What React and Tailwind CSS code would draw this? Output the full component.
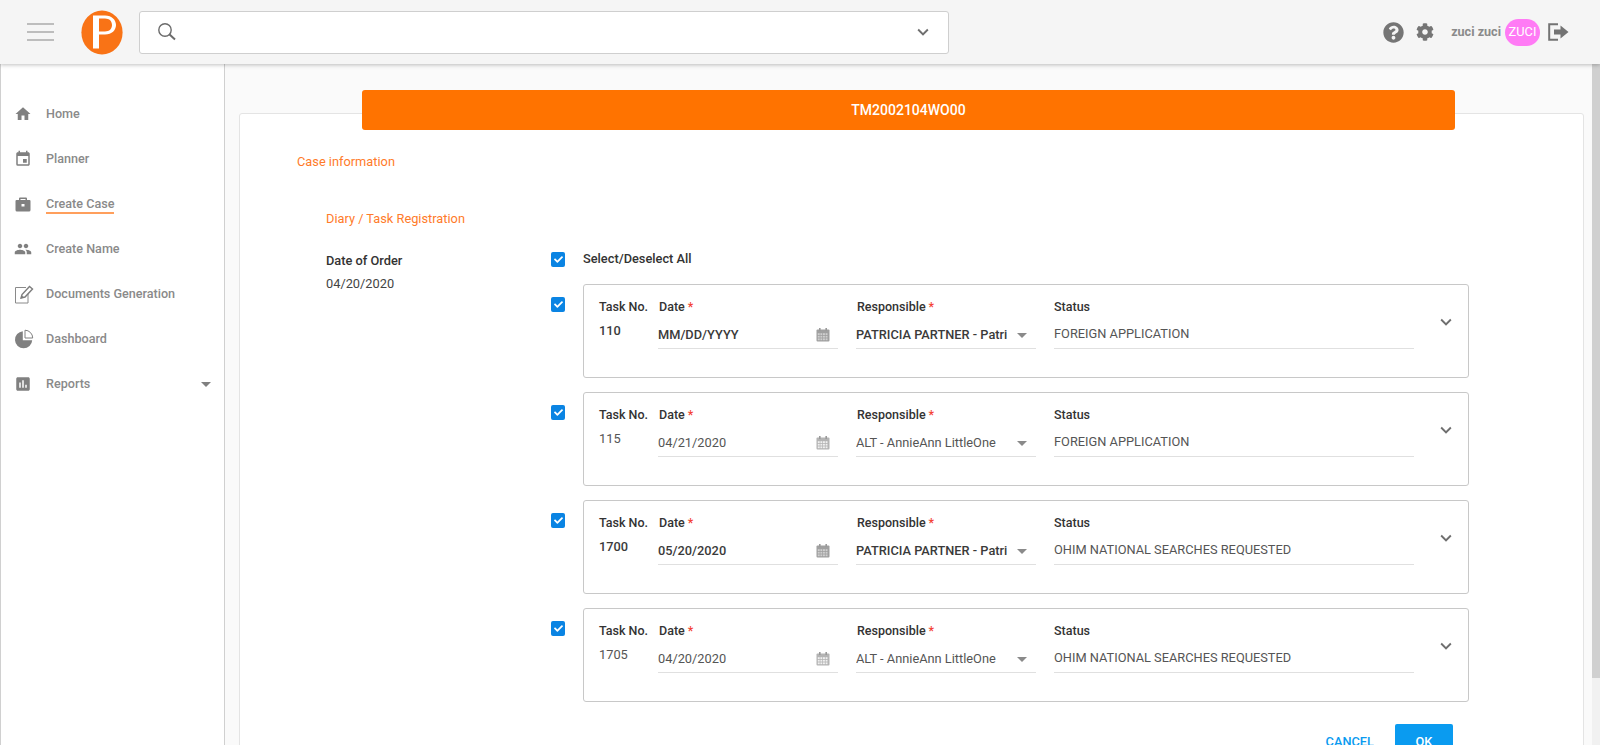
import React from "react";
import { MdHome, MdEvent, MdPeople, MdAssessment, MdArrowDropDown, MdKeyboardArrowDown } from "react-icons/md";
import { FaQuestionCircle, FaCog, FaCheck } from "react-icons/fa";

const Doc = () => (
  <svg width="20" height="20" viewBox="0 0 20 20" fill="none">
    <path d="M12 3.500H1.500V19H14V9" stroke="#8a8a8a" strokeWidth="1" />
    <path d="M7 14l1-3.500L15.500 2.500l3 2.500-7.500 8z" fill="#fff" stroke="#7d7d7d" strokeWidth="1.400" />
    <path d="M7 14.500l1-3 2 2z" fill="#7d7d7d" />
  </svg>
);
const Pie = () => (
  <svg width="20" height="20" viewBox="0 0 20 20">
    <path d="M8.800 2.200A8.600 8.600 0 1 0 18.200 11.200H8.800z" fill="#808080" />
    <path d="M11 1.200A7.800 7.800 0 0 1 18.700 9H11z" fill="#fff" stroke="#808080" strokeWidth="1" />
  </svg>
);
const Briefcase = () => (
  <svg width="18" height="18" viewBox="0 0 18 18">
    <path fillRule="evenodd" d="M6 2.500h6a1 1 0 0 1 1 1V5h2.500a1 1 0 0 1 1 1v9a1.500 1.500 0 0 1-1.500 1.500H3A1.500 1.500 0 0 1 1.500 15V6a1 1 0 0 1 1-1H5V3.500a1 1 0 0 1 1-1zM6.500 4v1h5V4zM7.500 9v2.500h3V9z" fill="#808080" />
  </svg>
);
const Calendar = ({ dark }) => (
  <svg width="14" height="14" viewBox="0 0 14 14">
    <rect x="0.500" y="1.500" width="13" height="12" rx="1" fill={dark ? "#a0a0a0" : "#b4b4b4"} />
    <rect x="3" y="0" width="1.600" height="3" fill="#9a9a9a" />
    <rect x="9.400" y="0" width="1.600" height="3" fill="#9a9a9a" />
    {[5.2, 7.8, 10.4].map((y) => [1.8, 4.4, 7, 9.6].map((x) => (
      <rect key={`${x}-${y}`} x={x} y={y} width="1.900" height="1.800" fill={dark ? "#cfcfcf" : "#f0f0f0"} />
    )))}
  </svg>
);
const Logout = () => (
  <svg width="21" height="18" viewBox="0 0 21 18" fill="none">
    <path d="M10 1.200H1.200v15.600H10" stroke="#737373" strokeWidth="2" />
    <path d="M6 6.500h6.500V2.500L20.500 9l-8 6.500v-4H6z" fill="#737373" />
  </svg>
);
const Search = () => (
  <svg width="20" height="20" viewBox="0 0 20 20" fill="none" stroke="#6b6b6b">
    <circle cx="8" cy="8" r="6.200" strokeWidth="1.400" />
    <path d="M12.600 12.600L18 17.600" strokeWidth="2" />
  </svg>
);

const nav = [
  { label: "Home", icon: <MdHome size={18} color="#808080" /> },
  { label: "Planner", icon: <MdEvent size={18} color="#808080" /> },
  { label: "Create Case", icon: <Briefcase />, active: true },
  { label: "Create Name", icon: <MdPeople size={18} color="#808080" /> },
  { label: "Documents Generation", icon: <Doc /> },
  { label: "Dashboard", icon: <Pie /> },
  { label: "Reports", icon: <MdAssessment size={18} color="#808080" />, caret: true },
];

const tasks = [
  { no: "110", date: "MM/DD/YYYY", who: "PATRICIA PARTNER - Patricia", status: "FOREIGN APPLICATION", strong: true },
  { no: "115", date: "04/21/2020", who: "ALT - AnnieAnn LittleOne", status: "FOREIGN APPLICATION" },
  { no: "1700", date: "05/20/2020", who: "PATRICIA PARTNER - Patricia", status: "OHIM NATIONAL SEARCHES REQUESTED", strong: true },
  { no: "1705", date: "04/20/2020", who: "ALT - AnnieAnn LittleOne", status: "OHIM NATIONAL SEARCHES REQUESTED" },
];

const Check = () => (
  <span className="flex h-[15px] w-[14px] shrink-0 items-center justify-center rounded-[2px] bg-[#0a84e3]">
    <FaCheck size={9} color="#fff" />
  </span>
);

const Label = ({ children, req }) => (
  <div className="h-[14px] text-[12.5px] leading-[14px] font-medium text-[#333]">
    {children}
    {req && <span className="ml-[3px] text-[#f44336]">*</span>}
  </div>
);

function TaskRow({ t }) {
  const text = t.strong ? "font-medium text-[#3a3a3a]" : "font-normal text-[#555]";
  return (
    <div className="flex">
      <div className="w-[32px] pt-[13px]"><Check /></div>
      <div className="flex h-[94px] w-[886px] rounded-[3px] border border-[#c8c8c8] bg-white pt-[15px]">
        <div className="ml-[15px] w-[59px]">
          <Label>Task No.</Label>
          <div className={`mt-[10px] text-[12.8px] leading-[14px] ${text}`}>{t.no}</div>
        </div>
        <div className="w-[198px]">
          <div className="pl-[1px]"><Label req>Date</Label></div>
          <div className={`mt-[7px] flex h-[28px] w-[180px] items-center justify-between border-b border-[#e0e0e0] pr-[7px] text-[12.8px] ${text}`}>
            <span>{t.date}</span>
            <span className="mr-[1px]"><Calendar dark={t.strong} /></span>
          </div>
        </div>
        <div className="w-[198px]">
          <div className="pl-[1px]"><Label req>Responsible</Label></div>
          <div className={`mt-[7px] flex h-[28px] w-[180px] items-center border-b border-[#e0e0e0] text-[12.8px] ${text}`}>
            <span className="w-[151px] overflow-hidden whitespace-nowrap">{t.who}</span>
            <span className="ml-[3px]"><MdArrowDropDown size={24} color="#8a8a8a" /></span>
          </div>
        </div>
        <div className="w-[360px]">
          <Label>Status</Label>
          <div className="mt-[6px] flex h-[29px] items-center border-b border-[#e0e0e0] pb-[1px] text-[12.8px] font-normal text-[#555]">
            {t.status}
          </div>
        </div>
        <div className="ml-[21px] pt-[11px]"><MdKeyboardArrowDown size={22} color="#6f6f6f" /></div>
      </div>
    </div>
  );
}

export default function App() {
  return (
    <div className="flex h-[745px] w-[1600px] flex-col overflow-hidden bg-[#fafafa] font-['Roboto',sans-serif]">
      <header className="relative z-10 flex h-[64px] shrink-0 items-center bg-[#f5f5f5] shadow-[0_1px_4px_rgba(0,0,0,0.25)]">
        <div className="ml-[27px] flex w-[27px] flex-col gap-[6px]">
          <span className="h-[2px] bg-[#bdbdbd]" />
          <span className="h-[2px] bg-[#bdbdbd]" />
          <span className="h-[2px] bg-[#bdbdbd]" />
        </div>
        <svg className="ml-[27px]" width="42" height="45" viewBox="0 0 42 45">
          <ellipse cx="21" cy="22.500" rx="20.600" ry="22" fill="#f97316" />
          <path fillRule="evenodd" d="M12 5.500h12c7 0 11 4.500 11 9.500s-4 9.500-11 9.500h-6v14h-6zM18 8.500v13h6c4.500 0 7-2.800 7-6.500S28.500 8.500 24 8.500z" fill="#fff" />
        </svg>
        <div className="ml-[16px] flex h-[43px] w-[810px] items-center rounded-[3px] border border-[#cfcfcf] bg-white pl-[17px] pr-[14px]">
          <Search />
          <span className="ml-auto"><MdKeyboardArrowDown size={22} color="#6f6f6f" /></span>
        </div>
        <div className="ml-auto mr-[31px] flex items-center">
          <FaQuestionCircle size={21} color="#757575" />
          <span className="ml-[12px]"><FaCog size={18} color="#757575" /></span>
          <span className="ml-[17px] text-[12.6px] font-bold text-[#8a8a8a]">zuci zuci</span>
          <span className="ml-[4px] flex h-[27px] w-[35px] items-center justify-center rounded-[14px] bg-[#ff7bf5] text-[12.8px] text-white">ZUCI</span>
          <span className="ml-[8px] flex"><Logout /></span>
        </div>
      </header>
      <div className="flex min-h-0 flex-1">
        <aside className="w-[225px] shrink-0 border-x border-[#d0d0d0] bg-white pt-[27px]">
          {nav.map((n) => (
            <div key={n.label} className="flex h-[45px] items-center pl-[13px] pr-[6px] text-[12.6px] font-medium text-[#8a8a8a]">
              <span className="flex w-[32px] shrink-0">{n.icon}</span>
              <span className={n.active ? "mt-[2px] border-b-2 border-[#ff9f5c] leading-[16px]" : "leading-[16px]"}>{n.label}</span>
              {n.caret && <span className="ml-auto"><MdArrowDropDown size={24} color="#808080" /></span>}
            </div>
          ))}
        </aside>
        <main className="min-w-0 flex-1 pl-[14px] pr-[8px] pt-[49px]">
          <div className="h-[700px] rounded-[3px] border border-[#e4e4e4] bg-white">
            <div className="ml-[122px] mr-[128px] -mt-[24px] flex h-[40px] items-center justify-center rounded-[3px] bg-[#ff7300] text-[14px] font-medium text-white">
              TM2002104WO00
            </div>
            <div className="pl-[57px] pt-[24px] text-[12.8px] leading-[16px] text-[#ff7b2a]">Case information</div>
            <div className="pl-[86px] pt-[41px] text-[12.8px] leading-[16px] text-[#ff7b2a]">Diary / Task Registration</div>
            <div className="flex pl-[86px] pt-[24px]">
              <div className="w-[225px] text-[12.8px]">
                <div className="pt-[3px] leading-[14px] font-medium text-[#333]">Date of Order</div>
                <div className="pt-[9px] leading-[14px] text-[#444]">04/20/2020</div>
              </div>
              <div className="flex flex-col gap-[14px]">
                <div className="flex h-[19px] items-center pb-[3px]">
                  <span className="w-[32px]"><Check /></span>
                  <span className="text-[12.8px] font-medium text-[#333]">Select/Deselect All</span>
                </div>
                {tasks.map((t) => <TaskRow key={t.no} t={t} />)}
                <div className="flex justify-end pr-[16px] pt-[8px]">
                  <span className="mr-[21px] pt-[8px] text-[12.8px] font-medium text-[#0a9bf0]">CANCEL</span>
                  <span className="flex h-[36px] w-[58px] items-center justify-center rounded-[2px] bg-[#0a9bf0] text-[12.8px] font-medium text-white">OK</span>
                </div>
              </div>
            </div>
          </div>
        </main>
        <div className="w-[8px] shrink-0 bg-[#f1f1f1]">
          <div className="h-[614px] bg-[#d0d0d0]" />
        </div>
      </div>
    </div>
  );
}
